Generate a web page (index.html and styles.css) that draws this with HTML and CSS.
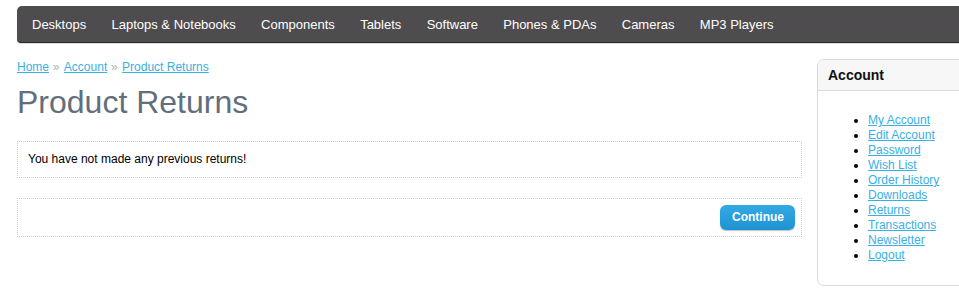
FILE: index.html
```html
<!DOCTYPE html>
<html>
<head>
<meta charset="utf-8">
<link rel="stylesheet" href="styles.css">
</head>
<body>
<div class="container">
  <nav class="menu">
    <a href="#">Desktops</a>
    <a href="#">Laptops &amp; Notebooks</a>
    <a href="#">Components</a>
    <a href="#">Tablets</a>
    <a href="#">Software</a>
    <a href="#">Phones &amp; PDAs</a>
    <a href="#">Cameras</a>
    <a href="#">MP3 Players</a>
  </nav>
  <div class="page">
    <div class="main">
      <div class="breadcrumb">
        <a href="#">Home</a><span class="sep"> » </span><a href="#">Account</a><span class="sep"> » </span><a href="#">Product Returns</a>
      </div>
      <h1 class="title">Product Returns</h1>
      <div class="content">You have not made any previous returns!</div>
      <div class="buttons">
        <a href="#" class="button">Continue</a>
      </div>
    </div>
    <aside class="side">
      <div class="box">
        <div class="box-heading">Account</div>
        <div class="box-content">
          <ul class="links">
            <li><a href="#">My Account</a></li>
            <li><a href="#">Edit Account</a></li>
            <li><a href="#">Password</a></li>
            <li><a href="#">Wish List</a></li>
            <li><a href="#">Order History</a></li>
            <li><a href="#">Downloads</a></li>
            <li><a href="#">Returns</a></li>
            <li><a href="#">Transactions</a></li>
            <li><a href="#">Newsletter</a></li>
            <li><a href="#">Logout</a></li>
          </ul>
        </div>
      </div>
    </aside>
  </div>
</div>
</body>
</html>
```
FILE: styles.css
```css
html, body {
  margin: 0;
  padding: 0;
  overflow: hidden;
  background: #fff;
}
body {
  font-family: "Liberation Sans", Arial, sans-serif;
  font-size: 12px;
  color: #000;
}
.container {
  width: 980px;
  margin-left: 17px;
  padding-top: 6px;
}
.menu {
  display: flex;
  align-items: center;
  height: 36px;
  background: #4e4c4e;
  border-bottom: 1px solid #2a2a2a;
  border-radius: 5px 5px 4px 4px;
  padding-left: 2px;
  box-shadow: 0 1px 1px rgba(0,0,0,0.15);
}
.menu a {
  color: #fff;
  text-decoration: none;
  font-size: 13px;
  padding: 0 12.3px 0 13px;
  line-height: 16px;
  margin-top: 1px;
}
.page {
  display: flex;
  margin-top: 16px;
  gap: 15px;
}
.main {
  width: 785px;
  flex: none;
}
.breadcrumb {
  line-height: 15px;
  padding-top: 1px;
  color: #aaa;
  font-size: 12px;
}
.breadcrumb a {
  color: #38b0e3;
}
.breadcrumb .sep {
  color: #b0b0b0;
  font-size: 12px;
  letter-spacing: 0.5px;
}
.title {
  margin: 8px 0 20px;
  font-size: 32px;
  font-weight: normal;
  line-height: 38px;
  color: #636e7b;
}
.content {
  border: 1px dotted #d9c7d9;
  padding: 10px;
  line-height: 15px;
  margin-bottom: 20px;
}
.buttons {
  border: 1px dotted #d9c7d9;
  padding: 6px 6px;
  display: flex;
  justify-content: flex-end;
}
.button {
  display: block;
  height: 25px;
  line-height: 25px;
  padding: 0 12px;
  box-sizing: border-box;
  width: 75px;
  text-align: center;
  border-radius: 6px;
  background: linear-gradient(#33a9e4, #1d93d3);
  box-shadow: 0 1px 1px rgba(0,0,0,0.25);
  color: #fff;
  font-weight: bold;
  font-size: 12px;
  text-decoration: none;
}
.side {
  width: 180px;
  flex: none;
}
.box {
  border: 1px solid #d8dcd8;
  border-radius: 7px;
}
.box-heading {
  height: 30px;
  line-height: 30px;
  padding: 0 10px;
  background: #f7f7f7;
  border-bottom: 1px solid #d8dcd8;
  border-radius: 7px 7px 0 0;
  font-size: 14px;
  font-weight: bold;
  color: #111;
}
.box-content {
  padding: 10px;
}
.links {
  margin: 12px 0;
  padding-left: 40px;
  list-style: disc;
}
.links li {
  line-height: 15px;
}
.links a {
  color: #38b0e3;
}
```
